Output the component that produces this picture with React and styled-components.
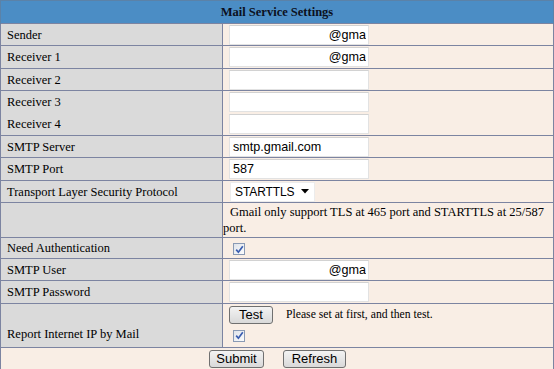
import React from "react";
import styled, { createGlobalStyle } from "styled-components";

const Global = createGlobalStyle`
  html, body { margin: 0; padding: 0; background: #ffffff; }
  body { font-family: "Liberation Serif", "Times New Roman", serif; font-size: 12.5px; color: #000; }
`;

const Table = styled.table`
  width: 554px;
  border-collapse: collapse;
  table-layout: fixed;
  font-family: "Liberation Serif", serif;
  font-size: 12.5px;
`;

const LabelCol = styled.col`
  width: 222px;
`;

const HeaderCell = styled.th`
  height: 22px;
  padding: 0;
  background: #4b8dc5;
  border: 1px solid #5b82a8;
  border-bottom: none;
  font-weight: bold;
  font-size: 12.5px;
  text-align: center;
  color: #0b1020;
`;

const Row = styled.tr`
  height: ${(p) => p.$h}px;
`;

const Label = styled.td`
  padding: 0 0 ${(p) => (p.$bottom ? 5 : 0)}px 6px;
  background: #dadada;
  border: 1px solid #7c84a1;
  ${(p) => p.$openBottom && "border-bottom: none;"}
  ${(p) => p.$openTop && "border-top: none;"}
  vertical-align: ${(p) => (p.$bottom ? "bottom" : "middle")};
  line-height: 16px;
  white-space: nowrap;
`;

const Value = styled.td`
  padding: 0 0 0 6px;
  background: #f9eee5;
  border: 1px solid #7c84a1;
  ${(p) => p.$openBottom && "border-bottom: none;"}
  ${(p) => p.$openTop && "border-top: none;"}
  vertical-align: middle;
  line-height: 16px;
`;

const Note = styled.td`
  padding: 0 4px 0 0;
  background: #f9eee5;
  border: 1px solid #7c84a1;
  text-indent: 7px;
  line-height: 16px;
`;

const Footer = styled.td`
  padding: 2px 0 0;
  background: #f9eee5;
  border: 1px solid #7c84a1;
  text-align: center;
  vertical-align: top;
`;

const Field = styled.input`
  box-sizing: border-box;
  display: block;
  width: 140px;
  height: 20px;
  margin: 0;
  padding: 0 2px 0 3px;
  border: 1px solid #e2e2e2;
  border-top-color: #d2d2d2;
  background: #ffffff;
  font-family: "Liberation Sans", Arial, sans-serif;
  font-size: 12.6px;
  color: #000;
  text-align: ${(p) => p.$align || "left"};
  outline: none;
`;

const Select = styled.div`
  box-sizing: border-box;
  display: flex;
  align-items: center;
  width: 85px;
  height: 20px;
  padding: 0 5px 0 4px;
  margin-left: 1px;
  background: #ffffff;
  border: 1px solid #ececec;
  font-family: "Liberation Sans", Arial, sans-serif;
  font-size: 12px;
  letter-spacing: -0.1px;
  white-space: nowrap;

  svg {
    flex-shrink: 0;
    margin-left: auto;
  }
`;

const Box = styled.span`
  box-sizing: border-box;
  display: inline-flex;
  align-items: center;
  justify-content: center;
  width: 12px;
  height: 12px;
  margin-left: 4px;
  border: 1px solid #8a9ab4;
  background: linear-gradient(135deg, #dfe3ea, #fbfcfd);
  vertical-align: middle;
`;

const Button = styled.button`
  box-sizing: border-box;
  height: 18px;
  width: ${(p) => p.$w}px;
  padding: 0;
  margin: 0;
  border: 1px solid #707070;
  border-radius: 3px;
  background: linear-gradient(#f3f3f3, #e6e6e6 50%, #d9d9d9);
  font-family: "Liberation Sans", Arial, sans-serif;
  font-size: 13px;
  line-height: 14px;
  color: #000;
`;

const TestLine = styled.div`
  display: flex;
  align-items: center;
  gap: 13px;
  height: 20px;
`;

const Hint = styled.span`
  font-size: 11.7px;
`;

const CheckLine = styled.div`
  height: 22px;
  display: flex;
  align-items: center;
`;

const Buttons = styled.div`
  display: flex;
  justify-content: center;
  gap: 19px;
  padding-left: 1px;
`;

const Check = () => (
  <Box>
    <svg width="9" height="9" viewBox="0 0 9 9">
      <path d="M1.2 4.6 L3.4 7.2 L7.8 1.2" fill="none" stroke="#3a5db0" strokeWidth="1.7" />
    </svg>
  </Box>
);

const Arrow = () => (
  <svg width="8" height="5" viewBox="0 0 8 5">
    <path d="M0 0 H8 L4 4.5 Z" fill="#000" />
  </svg>
);

export default function App() {
  return (
    <>
      <Global />
      <Table>
        <colgroup>
          <LabelCol />
          <col />
        </colgroup>
        <thead>
          <tr>
            <HeaderCell colSpan={2}>Mail Service Settings</HeaderCell>
          </tr>
        </thead>
        <tbody>
          <Row $h={22}>
            <Label>Sender</Label>
            <Value><Field readOnly value="@gma" $align="right" /></Value>
          </Row>
          <Row $h={23}>
            <Label>Receiver 1</Label>
            <Value><Field readOnly value="@gma" $align="right" /></Value>
          </Row>
          <Row $h={22}>
            <Label>Receiver 2</Label>
            <Value><Field readOnly value="" /></Value>
          </Row>
          <Row $h={23}>
            <Label $openBottom>Receiver 3</Label>
            <Value $openBottom><Field readOnly value="" /></Value>
          </Row>
          <Row $h={22}>
            <Label $openTop>Receiver 4</Label>
            <Value $openTop><Field readOnly value="" /></Value>
          </Row>
          <Row $h={22}>
            <Label>SMTP Server</Label>
            <Value><Field readOnly value="smtp.gmail.com" /></Value>
          </Row>
          <Row $h={23}>
            <Label>SMTP Port</Label>
            <Value><Field readOnly value="587" /></Value>
          </Row>
          <Row $h={22}>
            <Label>Transport Layer Security Protocol</Label>
            <Value>
              <Select>
                <span>STARTTLS</span>
                <Arrow />
              </Select>
            </Value>
          </Row>
          <Row $h={35}>
            <Label />
            <Note>Gmail only support TLS at 465 port and STARTTLS at 25/587 port.</Note>
          </Row>
          <Row $h={21}>
            <Label>Need Authentication</Label>
            <Value><Check /></Value>
          </Row>
          <Row $h={22}>
            <Label>SMTP User</Label>
            <Value><Field readOnly value="@gma" $align="right" /></Value>
          </Row>
          <Row $h={23}>
            <Label>SMTP Password</Label>
            <Value><Field readOnly type="password" value="" /></Value>
          </Row>
          <Row $h={44}>
            <Label $bottom>Report Internet IP by Mail</Label>
            <Value>
              <TestLine>
                <Button $w={44}>Test</Button>
                <Hint>Please set at first, and then test.</Hint>
              </TestLine>
              <CheckLine><Check /></CheckLine>
            </Value>
          </Row>
          <Row $h={23}>
            <Footer colSpan={2}>
              <Buttons>
                <Button $w={55}>Submit</Button>
                <Button $w={63}>Refresh</Button>
              </Buttons>
            </Footer>
          </Row>
        </tbody>
      </Table>
    </>
  );
}
